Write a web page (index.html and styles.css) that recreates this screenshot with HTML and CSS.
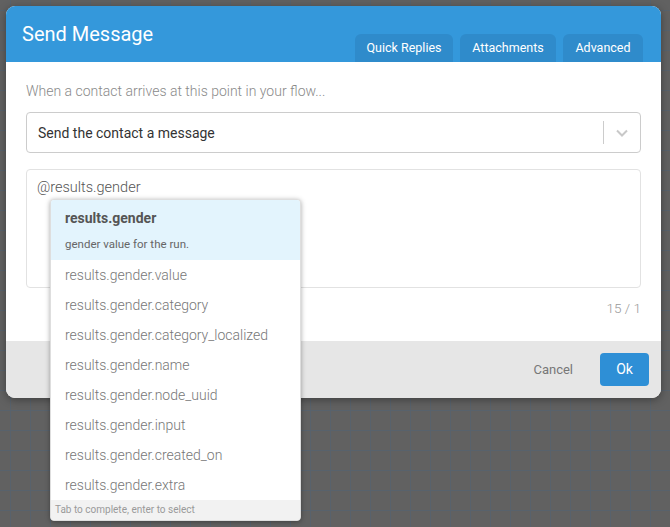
FILE: index.html
```html
<!DOCTYPE html>
<html>
<head>
<meta charset="utf-8">
<link rel="stylesheet" href="styles.css">
</head>
<body>
<div class="canvas">
  <div class="modal">
    <div class="header">
      <div class="title">Send Message</div>
      <div class="tabs">
        <div class="tab tab-quick">Quick Replies</div>
        <div class="tab tab-attach">Attachments</div>
        <div class="tab tab-adv">Advanced</div>
      </div>
    </div>
    <div class="body">
      <div class="label">When a contact arrives at this point in your flow...</div>
      <div class="select">
        <div class="select-value">Send the contact a message</div>
        <div class="select-sep"></div>
        <div class="select-arrow">
          <svg width="14" height="10" viewBox="0 0 14 10"><path d="M2 2.5 L7 7.5 L12 2.5" fill="none" stroke="#c8c8c8" stroke-width="2"/></svg>
        </div>
      </div>
      <div class="textarea">
        <div class="text">@results.gender</div>
        <div class="completion">
          <div class="opt-active">
            <div class="opt-title">results.gender</div>
            <div class="opt-desc">gender value for the run.</div>
          </div>
          <div class="opt">results.gender.value</div>
          <div class="opt">results.gender.category</div>
          <div class="opt">results.gender.category_localized</div>
          <div class="opt">results.gender.name</div>
          <div class="opt">results.gender.node_uuid</div>
          <div class="opt">results.gender.input</div>
          <div class="opt">results.gender.created_on</div>
          <div class="opt">results.gender.extra</div>
          <div class="opt-footer">Tab to complete, enter to select</div>
        </div>
      </div>
      <div class="counter">15 / 1</div>
    </div>
    <div class="footer">
      <div class="cancel">Cancel</div>
      <div class="ok">Ok</div>
    </div>
  </div>
</div>
</body>
</html>
```

FILE: styles.css
```css
html, body {
  margin: 0;
  padding: 0;
}
body {
  width: 670px;
  height: 527px;
  overflow: hidden;
  font-family: Roboto, "Liberation Sans", sans-serif;
  background-color: #616161;
  background-image:
    linear-gradient(to right, #58626c 1px, transparent 1px),
    linear-gradient(to bottom, #58626c 1px, transparent 1px);
  background-size: 20px 20px;
  background-position: 10px 10px;
}
.canvas {
  padding: 6px 0 0 6px;
}
.modal {
  width: 655px;
  background: #fff;
  border-radius: 9px;
  box-shadow: 0 2px 8px rgba(0,0,0,0.35);
  position: relative;
}
.header {
  height: 56px;
  background: #3498db;
  border-radius: 9px 9px 0 0;
  display: flex;
  justify-content: space-between;
  padding: 0 18px 0 16px;
}
.title {
  color: #fff;
  font-size: 20px;
  font-weight: 400;
  line-height: 20px;
  padding-top: 18px;
}
.tabs {
  display: flex;
  align-items: flex-end;
  gap: 7px;
}
.tab {
  box-sizing: border-box;
  height: 28px;
  line-height: 28px;
  background: #2f8bcb;
  color: #fff;
  font-size: 12.5px;
  border-radius: 6px 6px 0 0;
  text-align: center;
  white-space: nowrap;
}
.tab-quick { width: 98px; }
.tab-attach { width: 96px; }
.tab-adv { width: 80px; }
.body {
  padding: 19px 20px 0 20px;
}
.label {
  color: #8a8a8a;
  font-size: 14px;
  line-height: 20px;
  font-weight: 300;
  margin-bottom: 11px;
}
.select {
  height: 39px;
  border: 1px solid #cccccc;
  border-radius: 4px;
  display: flex;
  align-items: center;
}
.select-value {
  flex: 1;
  padding-left: 11px;
  color: #333;
  font-size: 14px;
}
.select-sep {
  width: 1px;
  height: 23px;
  background: #cccccc;
}
.select-arrow {
  width: 36px;
  display: flex;
  justify-content: center;
  align-items: center;
}
.textarea {
  margin-top: 16px;
  height: 117px;
  border: 1px solid #e2e2e2;
  border-radius: 4px;
  position: relative;
}
.text {
  padding: 8px 10px;
  color: #555;
  font-size: 14.5px;
  font-weight: 300;
  line-height: 20px;
}
.completion {
  position: absolute;
  left: 23px;
  top: 29px;
  width: 249px;
  background: #fff;
  border: 1px solid #dedede;
  border-radius: 4px;
  box-shadow: 0 1px 5px rgba(0,0,0,0.35);
  overflow: hidden;
  z-index: 5;
}
.opt-active {
  background: #e3f4fd;
  height: 60px;
  padding: 0 14px;
  box-sizing: border-box;
}
.opt-title {
  color: #555;
  font-size: 14px;
  font-weight: 700;
  line-height: 20px;
  padding-top: 8px;
}
.opt-desc {
  color: #666;
  font-size: 11.5px;
  line-height: 16px;
  padding-top: 8px;
}
.opt {
  height: 30px;
  line-height: 30px;
  padding: 0 14px;
  color: #777;
  font-size: 14px;
  font-weight: 300;
}
.opt-footer {
  height: 20px;
  line-height: 20px;
  background: #f2f2f2;
  color: #9a9a9a;
  font-size: 10px;
  padding: 0 4px;
}
.counter {
  text-align: right;
  color: #999;
  font-size: 13.5px;
  font-weight: 300;
  line-height: 20px;
  padding: 10px 0 23px;
}
.footer {
  height: 57px;
  background: #e6e6e6;
  border-radius: 0 0 9px 9px;
  display: flex;
  justify-content: flex-end;
  align-items: center;
  padding-right: 12px;
}
.cancel {
  color: #777;
  font-size: 13px;
  margin-right: 27px;
}
.ok {
  width: 49px;
  height: 33px;
  line-height: 33px;
  text-align: center;
  background: #2e8fd6;
  color: #fff;
  font-size: 14px;
  border-radius: 4px;
}
```
